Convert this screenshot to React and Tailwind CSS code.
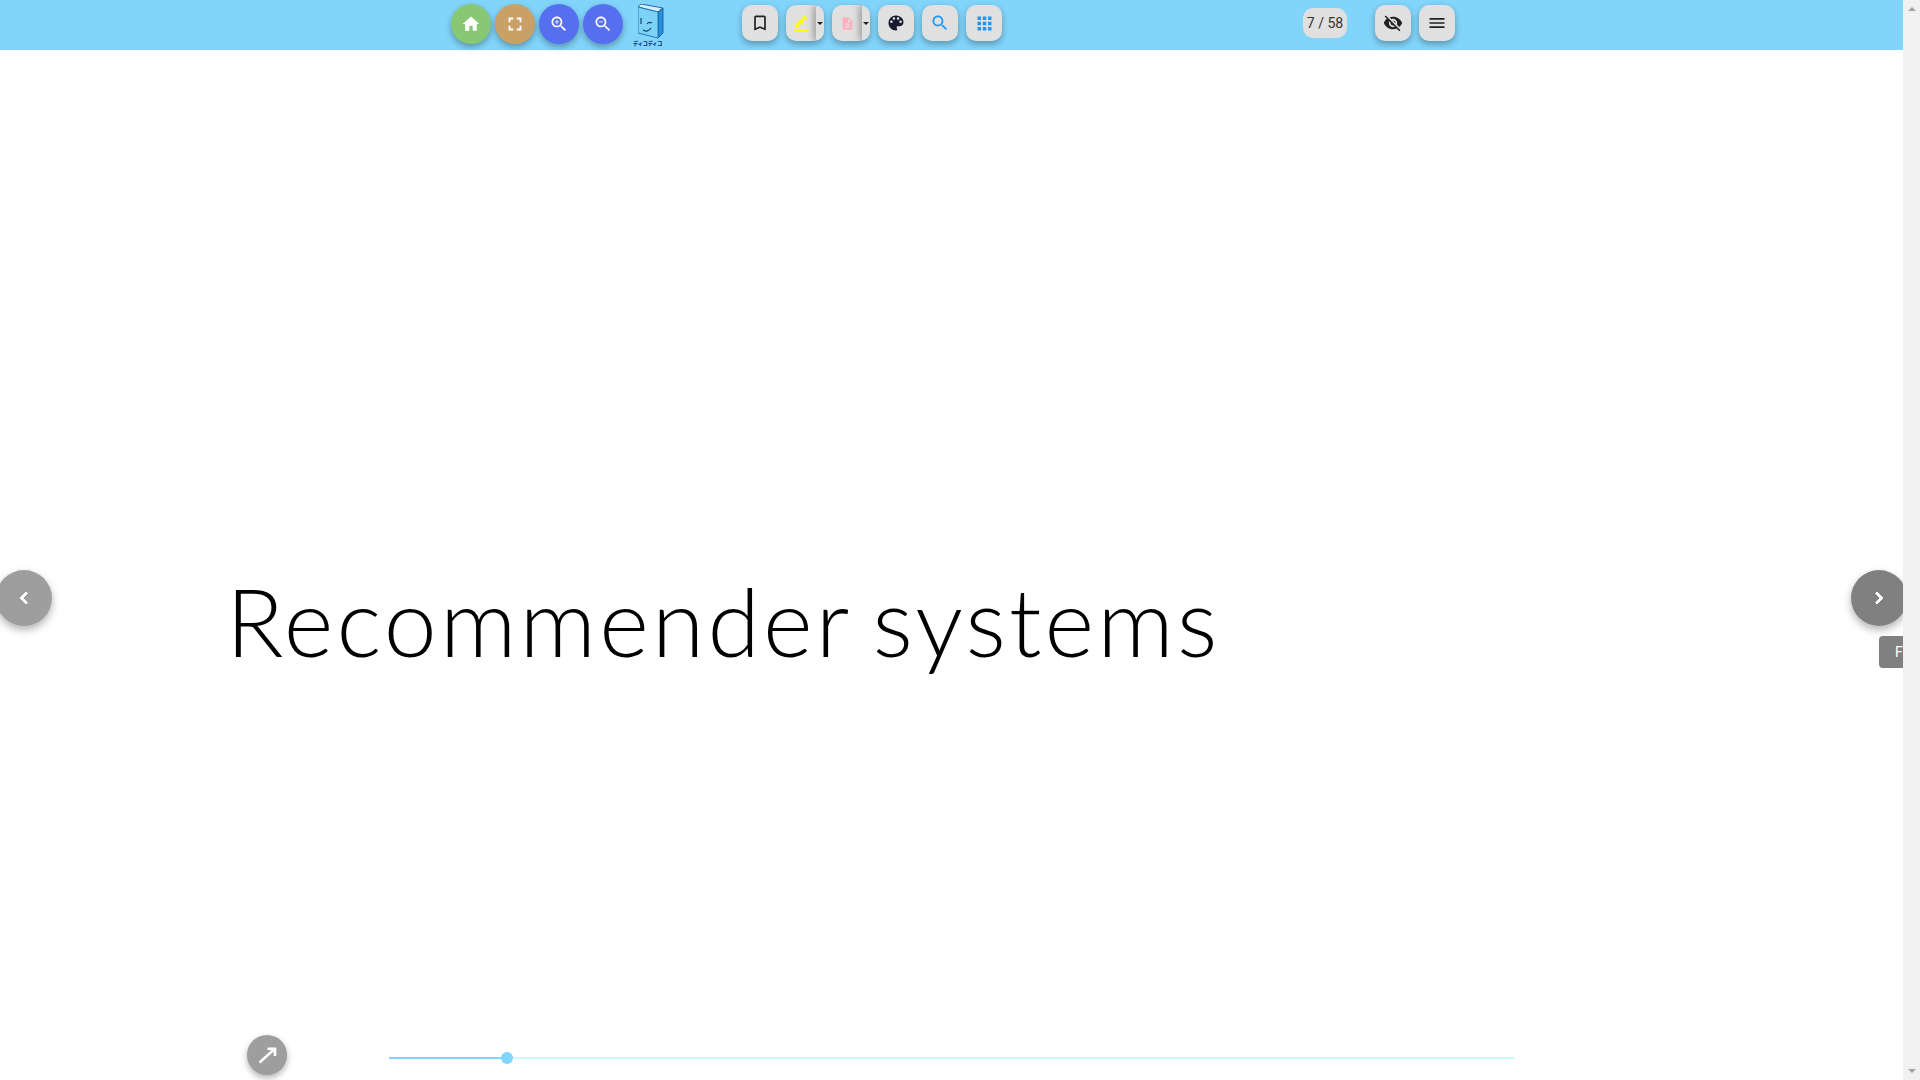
const paths = {
  home: "M10 20v-6h4v6h5v-8h3L12 3 2 12h3v8z",
  fullscreen: "M7 14H5v5h5v-2H7v-3zm-2-4h2V7h3V5H5v5zm12 7h-3v2h5v-5h-2v3zM14 5v2h3v3h2V5h-5z",
  search: "M15.5 14h-.79l-.28-.27C15.41 12.59 16 11.11 16 9.5 16 5.91 13.09 3 9.5 3S3 5.91 3 9.5 5.91 16 9.5 16c1.61 0 3.09-.59 4.23-1.57l.27.28v.79l5 4.99L20.49 19l-4.99-5zm-6 0C7.01 14 5 11.99 5 9.5S7.01 5 9.5 5 14 7.01 14 9.5 11.99 14 9.5 14z",
  zoomIn: "M15.5 14h-.79l-.28-.27C15.41 12.59 16 11.11 16 9.5 16 5.91 13.09 3 9.5 3S3 5.91 3 9.5 5.91 16 9.5 16c1.61 0 3.09-.59 4.23-1.57l.27.28v.79l5 4.99L20.49 19l-4.99-5zm-6 0C7.01 14 5 11.99 5 9.5S7.01 5 9.5 5 14 7.01 14 9.5 11.99 14 9.5 14zM12 10h-2v2H9v-2H7V9h2V7h1v2h2v1z",
  zoomOut: "M15.5 14h-.79l-.28-.27C15.41 12.59 16 11.11 16 9.5 16 5.91 13.09 3 9.5 3S3 5.91 3 9.5 5.91 16 9.5 16c1.61 0 3.09-.59 4.23-1.57l.27.28v.79l5 4.99L20.49 19l-4.99-5zm-6 0C7.01 14 5 11.99 5 9.5S7.01 5 9.5 5 14 7.01 14 9.5 11.99 14 9.5 14zM7 9h5v1H7z",
  bookmark: "M17 3H7c-1.1 0-1.99.9-1.99 2L5 21l7-3 7 3V5c0-1.1-.9-2-2-2zm0 15l-5-2.18L7 18V5h10v13z",
  pen: "M22 24H2v-4h20v4zM13.06 5.19l3.75 3.75L7.75 18H4v-3.75l9.06-9.06zm4.82 2.68l-3.75-3.75 1.83-1.83c.39-.39 1.02-.39 1.41 0l2.34 2.34c.39.39.39 1.02 0 1.41l-1.83 1.83z",
  doc: "M14 2H6c-1.1 0-1.99.9-1.99 2L4 20c0 1.1.89 2 1.99 2H18c1.1 0 2-.9 2-2V8l-6-6zm2 16H8v-2h8v2zm0-4H8v-2h8v2zm-3-5V3.5L18.5 9H13z",
  palette: "M12 3c-4.97 0-9 4.03-9 9s4.03 9 9 9c.83 0 1.5-.67 1.5-1.5 0-.39-.15-.74-.39-1.01-.23-.26-.38-.61-.38-.99 0-.83.67-1.5 1.5-1.5H16c2.76 0 5-2.24 5-5 0-4.42-4.03-8-9-8zm-5.5 9c-.83 0-1.5-.67-1.5-1.5S5.67 9 6.5 9 8 9.67 8 10.5 7.33 12 6.5 12zm3-4C8.67 8 8 7.33 8 6.5S8.67 5 9.5 5s1.5.67 1.5 1.5S10.33 8 9.5 8zm5 0c-.83 0-1.5-.67-1.5-1.5S13.67 5 14.5 5s1.5.67 1.5 1.5S15.33 8 14.5 8zm3 4c-.83 0-1.5-.67-1.5-1.5S16.67 9 17.5 9s1.5.67 1.5 1.5-.67 1.5-1.5 1.5z",
  grid: "M4 8h4V4H4v4zm6 12h4v-4h-4v4zm-6 0h4v-4H4v4zm0-6h4v-4H4v4zm6 0h4v-4h-4v4zm6-10v4h4V4h-4zm-6 4h4V4h-4v4zm6 6h4v-4h-4v4zm0 6h4v-4h-4v4z",
  eyeOff: "M12 7c2.76 0 5 2.24 5 5 0 .65-.13 1.26-.36 1.83l2.92 2.92c1.51-1.26 2.7-2.89 3.43-4.75-1.73-4.39-6-7.5-11-7.5-1.4 0-2.74.25-3.98.7l2.16 2.16C10.74 7.13 11.35 7 12 7zM2 4.27l2.28 2.28.46.46C3.08 8.3 1.78 10.02 1 12c1.73 4.39 6 7.5 11 7.5 1.55 0 3.03-.3 4.38-.84l.42.42L19.73 22 21 20.73 3.27 3 2 4.27zM7.53 9.8l1.55 1.55c-.05.21-.08.43-.08.65 0 1.66 1.34 3 3 3 .22 0 .44-.03.65-.08l1.55 1.55c-.67.33-1.41.53-2.2.53-2.76 0-5-2.24-5-5 0-.79.2-1.53.53-2.2zm4.31-.78l3.15 3.15.02-.16c0-1.66-1.34-3-3-3l-.17.01z",
  menu: "M3 18h18v-2H3v2zm0-5h18v-2H3v2zm0-7v2h18V6H3z",
  left: "M15.41 7.41L14 6l-6 6 6 6 1.41-1.41L10.83 12z",
  right: "M10 6L8.59 7.41 13.17 12l-4.58 4.59L10 18l6-6z",
};

const Icon = ({ name, className, bold }) => (
  <svg viewBox="0 0 24 24" className={className} fill="currentColor" stroke={bold ? "currentColor" : "none"} strokeWidth={bold ? 1 : 0}>
    <path d={paths[name]} />
  </svg>
);

const RoundBtn = ({ icon, color, size = "w-5 h-5" }) => (
  <button className={`w-10 h-10 rounded-full flex items-center justify-center text-white shadow-[0_3px_6px_rgba(0,0,0,0.3)] ${color}`}>
    <Icon name={icon} className={size} />
  </button>
);

const ToolBtn = ({ icon, color, size = "w-5 h-5" }) => (
  <button className={`w-9 h-9 rounded-[10px] bg-[#e0e0e0] flex items-center justify-center shadow-[0_3px_6px_rgba(0,0,0,0.3)] ${color}`}>
    <Icon name={icon} className={size} />
  </button>
);

const SplitBtn = ({ icon, color, size }) => (
  <div className="w-[38px] h-9 rounded-[10px] bg-[#e0e0e0] flex shadow-[0_3px_6px_rgba(0,0,0,0.3)] overflow-hidden">
    <div className={`w-[30px] flex items-center justify-center ${color}`}>
      <Icon name={icon} className={size} />
    </div>
    <div className="flex-1 flex items-center justify-center rounded-l-[3px] bg-[#e0e0e0] shadow-[-3px_0_6px_rgba(0,0,0,0.28)]">
      <div className="w-0 h-0 border-x-[3px] border-x-transparent border-t-[3px] border-t-[#212121]" />
    </div>
  </div>
);

const Logo = () => (
  <div className="w-[31px] h-[42px] flex flex-col items-start">
    <svg viewBox="0 0 26 35" className="w-[26px] h-[35px] ml-[5px]">
      <path d="M0 3 L3 0 L25 4 L20 8 Z" fill="#d5eef8" stroke="#1a5fa8" strokeWidth="0.9" />
      <path d="M20 8 L25 4 L25 29 L20 34 Z" fill="#2a8fd8" stroke="#1a5fa8" strokeWidth="0.9" />
      <path d="M0 3 L20 8 L20 34 L0 29 Z" fill="#7dd3f5" stroke="#1a6db8" strokeWidth="0.9" />
      <path d="M3 14v6M9 20c1.500-2 3-2 5-1M5 26c3 2 6 1 8-2" fill="none" stroke="#14406f" strokeWidth="1.2" />
    </svg>
    <span className="mt-px text-[5px] leading-[6px] font-black text-[#0a2f80] whitespace-nowrap font-['Noto_Sans_CJK_JP',sans-serif]">ディコディコ</span>
  </div>
);

export default function App() {
  return (
    <div className="flex w-[1920px] h-[1080px] overflow-hidden bg-white font-['Roboto',sans-serif]">
      <div className="relative w-[1903px] h-full flex flex-col overflow-hidden">
        <header className="h-[50px] shrink-0 bg-[#81d4fa] flex items-start pl-[451px]">
          <div className="flex gap-1 mt-1">
            <RoundBtn icon="home" color="bg-[#88c774]" />
            <RoundBtn icon="fullscreen" color="bg-[#c9a166]" size="w-[22px] h-[22px]" />
            <RoundBtn icon="zoomIn" color="bg-[#566ff0]" />
            <RoundBtn icon="zoomOut" color="bg-[#566ff0]" />
          </div>
          <div className="ml-[10px] mt-1">
            <Logo />
          </div>
          <div className="ml-[78px] mt-[5px] flex gap-2">
            <ToolBtn icon="bookmark" color="text-[#212121]" />
            <SplitBtn icon="pen" color="text-[#ffff00]" size="w-[18px] h-[18px]" />
            <SplitBtn icon="doc" color="text-[#ffb0c0]" size="w-[15px] h-[15px]" />
            <ToolBtn icon="palette" color="text-[#1a1a2e]" />
            <ToolBtn icon="search" color="text-[#2196f3]" />
            <ToolBtn icon="grid" color="text-[#2196f3]" size="w-[21px] h-[21px]" />
          </div>
          <div className="ml-[301px] mt-2 w-11 h-[30px] rounded-[10px] bg-[#e0e0e0] flex items-center justify-center text-sm text-[#333] whitespace-nowrap">
            7 / 58
          </div>
          <div className="ml-7 mt-[5px] flex gap-2">
            <ToolBtn icon="eyeOff" color="text-[#212121]" />
            <ToolBtn icon="menu" color="text-[#212121]" />
          </div>
        </header>

        <main className="flex-1 pl-[226px] pt-[515px]">
          <h1 className="font-['Lato',sans-serif] font-light text-[95px] leading-[110px] tracking-[3.2px] [word-spacing:-7px] text-black whitespace-nowrap">
            Recommender systems
          </h1>
        </main>

        <button className="absolute -left-1 top-[570px] w-14 h-14 rounded-full bg-[#9e9e9e] text-white flex items-center justify-center shadow-[0_4px_8px_rgba(0,0,0,0.3)]">
          <Icon name="left" className="w-6 h-6" bold />
        </button>
        <button className="absolute -right-1 top-[570px] w-14 h-14 rounded-full bg-[#808080] text-white flex items-center justify-center shadow-[0_4px_8px_rgba(0,0,0,0.3)]">
          <Icon name="right" className="w-6 h-6" bold />
        </button>
        <div className="absolute left-[1879px] top-[636px] h-8 w-10 rounded-[4px] bg-[#808080] text-white text-sm flex items-center pl-4">
          F
        </div>
        <button className="absolute left-[247px] top-[1035px] w-10 h-10 rounded-full bg-[#9e9e9e] text-white flex items-center justify-center shadow-[0_3px_6px_rgba(0,0,0,0.3)]">
          <svg viewBox="0 0 24 24" className="w-6 h-6" fill="none" stroke="currentColor" strokeWidth="2.6">
            <path d="M4.500 19.500L19 6.500M12.500 5.700H20V13" />
          </svg>
        </button>

        <div className="absolute left-[389px] top-[1057px] w-[1125px] h-[2px] bg-[#ccfaff]">
          <div className="h-full w-[118px] bg-[#81d4fa]" />
          <div className="absolute left-[112px] -top-[5px] w-3 h-3 rounded-full bg-[#81d4fa]" />
        </div>
      </div>

      <div className="w-[17px] h-full bg-[#f1f1f1] flex flex-col items-center justify-between py-[7px]">
        <div className="w-0 h-0 border-x-[4px] border-x-transparent border-b-[4px] border-b-[#a3a3a3]" />
        <div className="w-0 h-0 border-x-[4px] border-x-transparent border-t-[4px] border-t-[#a3a3a3]" />
      </div>
    </div>
  );
}
